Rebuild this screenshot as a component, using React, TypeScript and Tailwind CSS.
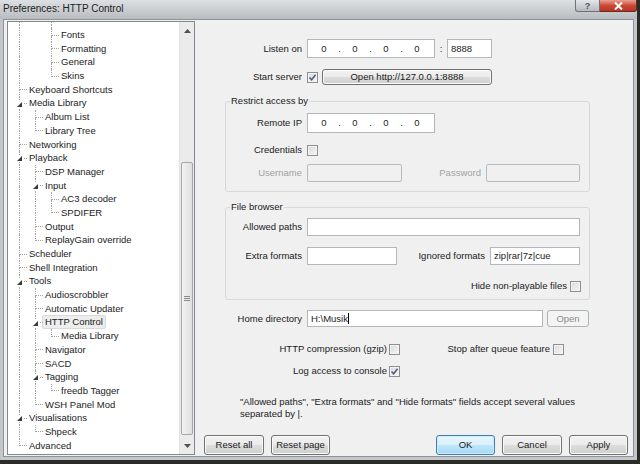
import React from "react";

type Node = { label: string; level: number; open?: boolean; sel?: boolean };

const tree: Node[] = [
  { label: "Fonts", level: 2 },
  { label: "Formatting", level: 2 },
  { label: "General", level: 2 },
  { label: "Skins", level: 2 },
  { label: "Keyboard Shortcuts", level: 0 },
  { label: "Media Library", level: 0, open: true },
  { label: "Album List", level: 1 },
  { label: "Library Tree", level: 1 },
  { label: "Networking", level: 0 },
  { label: "Playback", level: 0, open: true },
  { label: "DSP Manager", level: 1 },
  { label: "Input", level: 1, open: true },
  { label: "AC3 decoder", level: 2 },
  { label: "SPDIFER", level: 2 },
  { label: "Output", level: 1 },
  { label: "ReplayGain override", level: 1 },
  { label: "Scheduler", level: 0 },
  { label: "Shell Integration", level: 0 },
  { label: "Tools", level: 0, open: true },
  { label: "Audioscrobbler", level: 1 },
  { label: "Automatic Updater", level: 1 },
  { label: "HTTP Control", level: 1, open: true, sel: true },
  { label: "Media Library", level: 2 },
  { label: "Navigator", level: 1 },
  { label: "SACD", level: 1 },
  { label: "Tagging", level: 1, open: true },
  { label: "freedb Tagger", level: 2 },
  { label: "WSH Panel Mod", level: 1 },
  { label: "Visualisations", level: 0, open: true },
  { label: "Shpeck", level: 1 },
  { label: "Advanced", level: 0 },
];

// is there a later sibling at level k before the branch closes
const hasLater = (i: number, k: number) => {
  for (let j = i + 1; j < tree.length; j++) {
    if (tree[j].level < k) return false;
    if (tree[j].level === k) return true;
  }
  return false;
};

const Cell = ({ top, bottom, conn, open }: { top?: boolean; bottom?: boolean; conn?: boolean; open?: boolean }) => (
  <div className="relative w-[16px] shrink-0 flex flex-col">
    <div className={`flex-1 ml-[8px] border-dotted border-[#a3a3a3] ${top ? "border-l" : ""} ${conn ? "border-b" : ""}`} />
    <div className={`flex-1 ml-[8px] border-dotted border-[#a3a3a3] ${bottom ? "border-l" : ""}`} />
    {open && (
      <svg className="absolute left-[5px] top-[4px]" width="7" height="7" viewBox="0 0 7 7">
        <rect x="0" y="0" width="7" height="7" fill="#ffffff" />
        <path d="M6 1 L6 6 L1 6 Z" fill="#3a3a3a" />
      </svg>
    )}
  </div>
);

const Check = ({ checked }: { checked?: boolean }) => (
  <span className="w-[11px] h-[11px] shrink-0 border border-[#8f8f8f] bg-[linear-gradient(135deg,#dadada,#f7f7f7)] shadow-[inset_0_0_0_1px_#f4f4f4] flex items-center justify-center">
    {checked && (
      <svg width="9" height="9" viewBox="0 0 9 9">
        <path d="M1.5 4.5 L3.6 6.8 L7.6 1.8" stroke="#4c5f86" strokeWidth="1.6" fill="none" />
      </svg>
    )}
  </span>
);

const Btn = ({ children, className, ok, disabled }: { children: React.ReactNode; className: string; ok?: boolean; disabled?: boolean }) => (
  <div
    className={`${className} flex items-center justify-center rounded-[3px] border ${
      ok
        ? "border-[#3c7fb1] bg-[linear-gradient(#eaf6fd_0%,#d9f0fc_50%,#bee6fd_51%,#a7d9f5_100%)] shadow-[inset_0_0_0_1px_#c9ecff]"
        : disabled
        ? "border-[#adb2b5] bg-[#f4f4f4] text-[#8a8a8a]"
        : "border-[#707070] bg-[linear-gradient(#f2f2f2_0%,#ebebeb_50%,#dddddd_51%,#cfcfcf_100%)] shadow-[inset_0_0_0_1px_#fbfbfb]"
    }`}
  >
    {children}
  </div>
);

const IpBox = () => (
  <div className="w-[128px] h-full bg-white border border-[#b3b6bb] flex items-center pl-[2px]">
    {[0, 1, 2, 3].map((n) => (
      <React.Fragment key={n}>
        {n > 0 && <span className="w-[3px] text-center">.</span>}
        <span className="w-[28px] text-center">0</span>
      </React.Fragment>
    ))}
  </div>
);

const Label = ({ children, className, muted }: { children: React.ReactNode; className: string; muted?: boolean }) => (
  <span className={`${className} shrink-0 text-right whitespace-nowrap ${muted ? "text-[#a2a2a2]" : ""}`}>{children}</span>
);

export default function App() {
  return (
    <div className="w-[640px] h-[464px] overflow-hidden bg-[#2b2c27] text-[9.5px] leading-[12px] text-[#1b1b1b] [font-family:'Liberation_Sans',Arial,sans-serif]">
      <div className="w-[637px] h-[460px] bg-[#c3c7cb] flex flex-col">
        {/* title bar */}
        <div className="h-[19px] flex items-start justify-between bg-gradient-to-b from-[#dde0e3] to-[#b8bcc0]">
          <span className="pl-[3px] pt-[3px] text-[10px] text-[#222]">Preferences: HTTP Control</span>
          <div className="flex">
            <div className="w-[25px] h-[12px] rounded-bl-[3px] border border-t-0 border-[#6e7276] bg-gradient-to-b from-[#e4e7ea] to-[#b6bbc0] flex items-center justify-center text-[9px] font-bold text-[#555]">?</div>
            <div className="w-[37px] h-[12px] rounded-br-[3px] border border-t-0 border-l-0 border-[#6b2a22] bg-gradient-to-b from-[#e8a093] via-[#c94a36] to-[#b8331f] flex items-center justify-center">
              <svg width="11" height="8" viewBox="0 0 11 8">
                <path d="M2 0.5 L9 7.5 M9 0.5 L2 7.5" stroke="#ffffff" strokeWidth="2" />
              </svg>
            </div>
          </div>
        </div>

        {/* client area */}
        <div className="flex-1 mx-[3px] mb-[3px] bg-[#f0f0f0] border border-[#8e9398] flex">
          {/* tree */}
          <div className="w-[188px] ml-[3px] my-[1px] bg-white border border-[#828790] flex">
            <div className="flex-1 overflow-hidden pl-[3px]">
              <div className="flex h-[6.2px]">
                <Cell top bottom />
                <Cell />
                <Cell top bottom />
              </div>
              {tree.map((n, i) => (
                <div key={i} className="flex h-[13.7px]">
                  {Array.from({ length: n.level + 1 }).map((_, k) =>
                    k < n.level ? (
                      <Cell key={k} top={hasLater(i, k)} bottom={hasLater(i, k)} />
                    ) : (
                      <Cell key={k} top conn bottom={hasLater(i, k)} open={n.open} />
                    )
                  )}
                  {n.sel ? (
                    <span className="self-center -ml-[1px] px-[2px] h-[14px] flex items-center whitespace-nowrap bg-[#ededed] border border-[#d9d9d9] rounded-[2px]">
                      {n.label}
                    </span>
                  ) : (
                    <span className="self-center ml-[2px] whitespace-nowrap">{n.label}</span>
                  )}
                </div>
              ))}
            </div>
            {/* scrollbar */}
            <div className="w-[15px] flex flex-col bg-[#ebebeb] border-l border-[#e3e3e3]">
              <div className="h-[17px] flex items-center justify-center">
                <svg width="7" height="4" viewBox="0 0 7 4">
                  <path d="M3.5 0 L7 4 L0 4 Z" fill="#505050" />
                </svg>
              </div>
              <div className="h-[123px]" />
              <div className="h-[273px] mx-[1px] rounded-[2px] border border-[#a7a7a7] bg-[linear-gradient(to_right,#f3f3f3,#dedede)] flex flex-col items-center justify-center gap-[1px]">
                <span className="w-[6px] h-[1px] bg-[#8a8a8a]" />
                <span className="w-[6px] h-[1px] bg-[#8a8a8a]" />
                <span className="w-[6px] h-[1px] bg-[#8a8a8a]" />
              </div>
              <div className="flex-1" />
              <div className="h-[17px] flex items-center justify-center">
                <svg width="7" height="4" viewBox="0 0 7 4">
                  <path d="M0 0 L7 0 L3.5 4 Z" fill="#505050" />
                </svg>
              </div>
            </div>
          </div>

          {/* settings */}
          <div className="flex-1 flex flex-col">
            <div className="mt-[19px] h-[19px] flex items-center">
              <Label className="w-[107px]">Listen on</Label>
              <div className="ml-[5px] h-full flex items-center">
                <IpBox />
                <span className="w-[12px] text-center">:</span>
                <div className="w-[45px] h-full bg-white border border-[#b3b6bb] flex items-center pl-[3px]">8888</div>
              </div>
            </div>

            <div className="mt-[11px] h-[16px] flex items-center">
              <Label className="w-[107px]">Start server</Label>
              <span className="ml-[5px]">
                <Check checked />
              </span>
              <Btn className="ml-[4px] w-[170px] h-full">Open http://127.0.0.1:8888</Btn>
            </div>

            <fieldset className="mt-[10px] ml-[30px] w-[365px] border border-[#d5d9dc] rounded-[3px] pb-[9px]">
              <legend className="ml-[4px] px-[1px] leading-[12px]">Restrict access by</legend>
              <div className="mt-[6px] h-[20px] flex items-center">
                <Label className="w-[76px]">Remote IP</Label>
                <div className="ml-[5px] h-full">
                  <IpBox />
                </div>
              </div>
              <div className="mt-[11px] h-[12px] flex items-center">
                <Label className="w-[76px]">Credentials</Label>
                <span className="ml-[5px]">
                  <Check />
                </span>
              </div>
              <div className="mt-[8px] h-[18px] flex items-center">
                <Label className="w-[76px]" muted>Username</Label>
                <div className="ml-[5px] w-[95px] h-full border border-[#b8bbbe] rounded-[2px]" />
                <Label className="w-[79px]" muted>Password</Label>
                <div className="ml-[5px] w-[94px] h-full border border-[#b8bbbe] rounded-[2px]" />
              </div>
            </fieldset>

            <fieldset className="mt-[9px] ml-[30px] w-[365px] border border-[#d5d9dc] rounded-[3px] pb-[7px]">
              <legend className="ml-[4px] px-[1px] leading-[12px]">File browser</legend>
              <div className="mt-[5px] h-[18px] flex items-center">
                <Label className="w-[76px]">Allowed paths</Label>
                <div className="ml-[5px] w-[273px] h-full bg-white border border-[#b3b6bb]" />
              </div>
              <div className="mt-[11px] h-[18px] flex items-center">
                <Label className="w-[76px]">Extra formats</Label>
                <div className="ml-[5px] w-[90px] h-full bg-white border border-[#b3b6bb]" />
                <Label className="w-[88px]">Ignored formats</Label>
                <div className="ml-[5px] w-[90px] h-full bg-white border border-[#b3b6bb] flex items-center pl-[3px]">zip|rar|7z|cue</div>
              </div>
              <div className="mt-[15px] h-[12px] flex items-center justify-end pr-[8px]">
                <span className="whitespace-nowrap">Hide non-playable files</span>
                <span className="ml-[3px]">
                  <Check />
                </span>
              </div>
            </fieldset>

            <div className="mt-[10px] h-[17px] flex items-center">
              <Label className="w-[107px]">Home directory</Label>
              <div className="ml-[5px] w-[236px] h-full bg-white border border-[#b3b6bb] flex items-center pl-[3px]">
                {"H:\\Musik"}
                <span className="w-[1px] h-[11px] bg-black" />
              </div>
              <Btn className="ml-[4px] w-[42px] h-full" disabled>
                Open
              </Btn>
            </div>

            <div className="mt-[16px] h-[12px] flex items-center">
              <Label className="w-[192px]">HTTP compression (gzip)</Label>
              <span className="ml-[2px]">
                <Check />
              </span>
              <Label className="w-[150px]">Stop after queue feature</Label>
              <span className="ml-[3px]">
                <Check />
              </span>
            </div>

            <div className="mt-[10px] h-[12px] flex items-center">
              <Label className="w-[192px]">Log access to console</Label>
              <span className="ml-[2px]">
                <Check checked />
              </span>
            </div>

            <p className="mt-[19px] ml-[45px] leading-[11.5px] w-[340px]">
              "Allowed paths", "Extra formats" and "Hide formats" fields accept several values
              <br />
              separated by |.
            </p>

            <div className="mt-[16px] h-[20px] flex justify-between pl-[9px] pr-[5px]">
              <div className="flex gap-[7px]">
                <Btn className="w-[60px] h-full">Reset all</Btn>
                <Btn className="w-[59px] h-full">Reset page</Btn>
              </div>
              <div className="flex gap-[7px]">
                <Btn className="w-[59px] h-full" ok>
                  OK
                </Btn>
                <Btn className="w-[60px] h-full">Cancel</Btn>
                <Btn className="w-[59px] h-full">Apply</Btn>
              </div>
            </div>
          </div>
        </div>
      </div>
    </div>
  );
}
